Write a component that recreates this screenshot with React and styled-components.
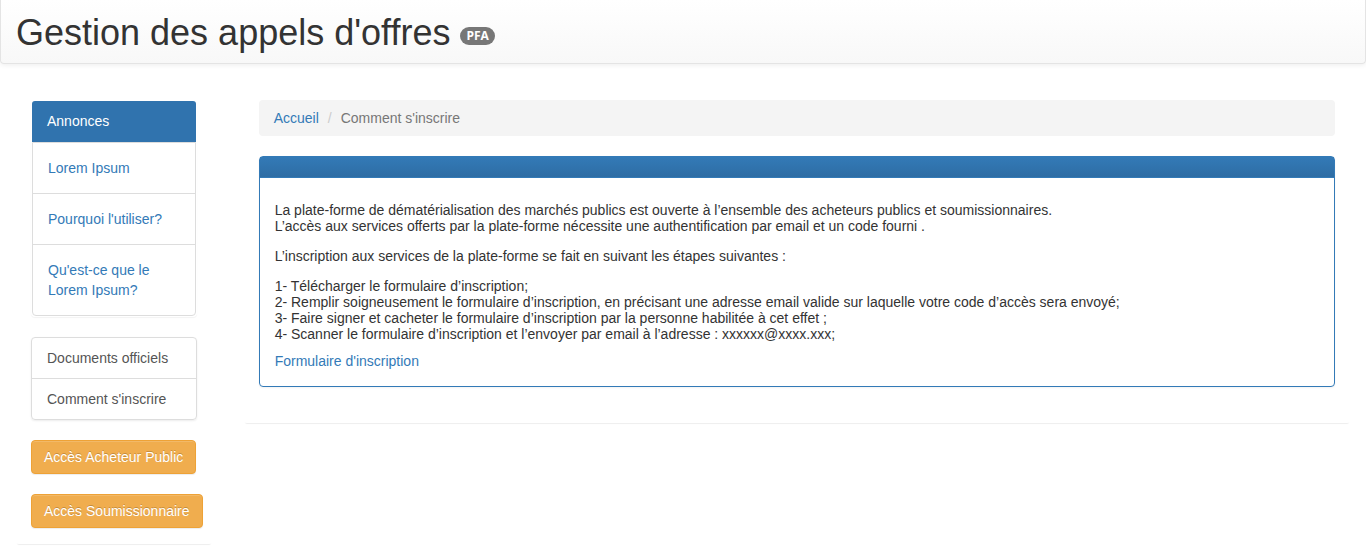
import React from "react";
import styled, { createGlobalStyle } from "styled-components";

const GlobalStyle = createGlobalStyle`
  *, *::before, *::after { box-sizing: border-box; }
  body {
    margin: 0;
    min-height: 100vh;
    background: #fff;
    color: #333;
    font: 14px/20px "Liberation Sans", Arial, sans-serif;
  }
`;

const Header = styled.header`
  display: flex;
  align-items: center;
  gap: 10px;
  padding: 13px 15px 10px;
  margin-bottom: 20px;
  border: 1px solid #e4e4e4;
  border-top: 0;
  border-radius: 0 0 4px 4px;
  background: linear-gradient(#fff, #f8f8f8);
  box-shadow: 0 1px 5px rgba(0, 0, 0, 0.075);
`;

const Title = styled.h1`
  margin: 0;
  font-size: 36px;
  line-height: 40px;
  font-weight: 400;
`;

const Badge = styled.span`
  margin-top: 6px;
  padding: 3px 6px;
  border-radius: 10px;
  background: #777;
  color: #fff;
  font-family: "Open Sans", sans-serif;
  font-size: 12px;
  line-height: 12px;
  font-weight: 700;
`;

const Columns = styled.div`
  display: grid;
  grid-template-columns: minmax(0, 2fr) minmax(0, 10fr);
  align-items: start;
  padding-bottom: 8px;
`;

const Card = styled.div`
  margin: 0 15px;
  padding: 16px;
  border-radius: 4px;
  box-shadow: 0 3px 1px -2px rgba(0, 0, 0, 0.07);
`;

const Link = styled.a`
  color: #337ab7;
  text-decoration: none;
  &:hover { text-decoration: underline; }
`;

const NewsPanel = styled.section`
  padding: 1px;
  margin-bottom: 20px;
  border-radius: 4px;
  box-shadow: 0 1px 1px rgba(0, 0, 0, 0.05);
`;

const NewsHeading = styled.h2`
  margin: 0;
  padding: 10px 15px 11px;
  border-radius: 3px 3px 0 0;
  background: #3073ae;
  color: #fff;
  font-size: 14px;
  line-height: 20px;
  font-weight: 400;
`;

const NewsList = styled.ul`
  margin: 0;
  padding: 0;
  list-style: none;
  border: 1px solid #ddd;
  border-radius: 0 0 4px 4px;
`;

const NewsItem = styled.li`
  padding: 15px;
  & + & { border-top: 1px solid #ddd; }
`;

const MenuList = styled.nav`
  display: flex;
  flex-direction: column;
  margin-bottom: 20px;
  border: 1px solid #ddd;
  border-radius: 4px;
  box-shadow: 0 1px 2px rgba(0, 0, 0, 0.075);
`;

const MenuLink = styled.a`
  padding: 10px 15px;
  color: #555;
  text-decoration: none;
  & + & { border-top: 1px solid #ddd; }
  &:hover { background: #f5f5f5; }
`;

const Actions = styled.div`
  display: flex;
  flex-direction: column;
  align-items: flex-start;
  gap: 20px;
`;

const ActionButton = styled.button`
  padding: 6px 12px;
  border: 1px solid #eea236;
  border-radius: 4px;
  background: #f0ad4e;
  color: #fff;
  font: inherit;
  white-space: nowrap;
  text-shadow: 0 -1px 0 rgba(0, 0, 0, 0.2);
  box-shadow: inset 0 1px 0 rgba(255, 255, 255, 0.15), 0 1px 1px rgba(0, 0, 0, 0.075);
  cursor: pointer;
`;

const Breadcrumb = styled.nav`
  display: flex;
  gap: 9px;
  padding: 8px 15px;
  margin-bottom: 20px;
  border-radius: 4px;
  background: #f4f4f4;
`;

const Separator = styled.span`
  color: #ccc;
`;

const Current = styled.span`
  color: #777;
`;

const Panel = styled.section`
  margin-bottom: 20px;
  border: 1px solid #337ab7;
  border-radius: 4px;
  box-shadow: 0 1px 2px rgba(0, 0, 0, 0.05);
`;

const PanelHeading = styled.div`
  padding: 10px 15px;
  border-bottom: 1px solid #337ab7;
  background: linear-gradient(#337ab7, #2e6da4);
`;

const PanelBody = styled.div`
  padding: 24px 15px 15px;
`;

const Paragraph = styled.p`
  margin: 0 0 14px;
  line-height: 16px;
`;

const Steps = styled(Paragraph)`
  margin-bottom: 9px;
`;

const news = ["Lorem Ipsum", "Pourquoi l'utiliser?", "Qu'est-ce que le Lorem Ipsum?"];
const menu = ["Documents officiels", "Comment s'inscrire"];
const actions = ["Accès Acheteur Public", "Accès Soumissionnaire"];

export default function App() {
  return (
    <>
      <GlobalStyle />
      <Header>
        <Title>Gestion des appels d'offres</Title>
        <Badge>PFA</Badge>
      </Header>
      <Columns>
        <Card as="aside">
          <NewsPanel>
            <NewsHeading>Annonces</NewsHeading>
            <NewsList>
              {news.map((label) => (
                <NewsItem key={label}>
                  <Link href="#">{label}</Link>
                </NewsItem>
              ))}
            </NewsList>
          </NewsPanel>
          <MenuList>
            {menu.map((label) => (
              <MenuLink key={label} href="#">{label}</MenuLink>
            ))}
          </MenuList>
          <Actions>
            {actions.map((label) => (
              <ActionButton key={label} type="button">{label}</ActionButton>
            ))}
          </Actions>
        </Card>
        <Card as="main">
          <Breadcrumb>
            <Link href="#">Accueil</Link>
            <Separator>/</Separator>
            <Current>Comment s'inscrire</Current>
          </Breadcrumb>
          <Panel>
            <PanelHeading />
            <PanelBody>
              <Paragraph>
                La plate-forme de dématérialisation des marchés publics est ouverte à l’ensemble des acheteurs publics et soumissionnaires.
                <br />
                L’accès aux services offerts par la plate-forme nécessite une authentification par email et un code fourni .
              </Paragraph>
              <Paragraph>
                L’inscription aux services de la plate-forme se fait en suivant les étapes suivantes :
              </Paragraph>
              <Steps>
                1- Télécharger le formulaire d’inscription;
                <br />
                2- Remplir soigneusement le formulaire d’inscription, en précisant une adresse email valide sur laquelle votre code d’accès sera envoyé;
                <br />
                3- Faire signer et cacheter le formulaire d’inscription par la personne habilitée à cet effet ;
                <br />
                4- Scanner le formulaire d’inscription et l’envoyer par email à l’adresse : xxxxxx@xxxx.xxx;
              </Steps>
              <Link href="#">Formulaire d'inscription</Link>
            </PanelBody>
          </Panel>
        </Card>
      </Columns>
    </>
  );
}
